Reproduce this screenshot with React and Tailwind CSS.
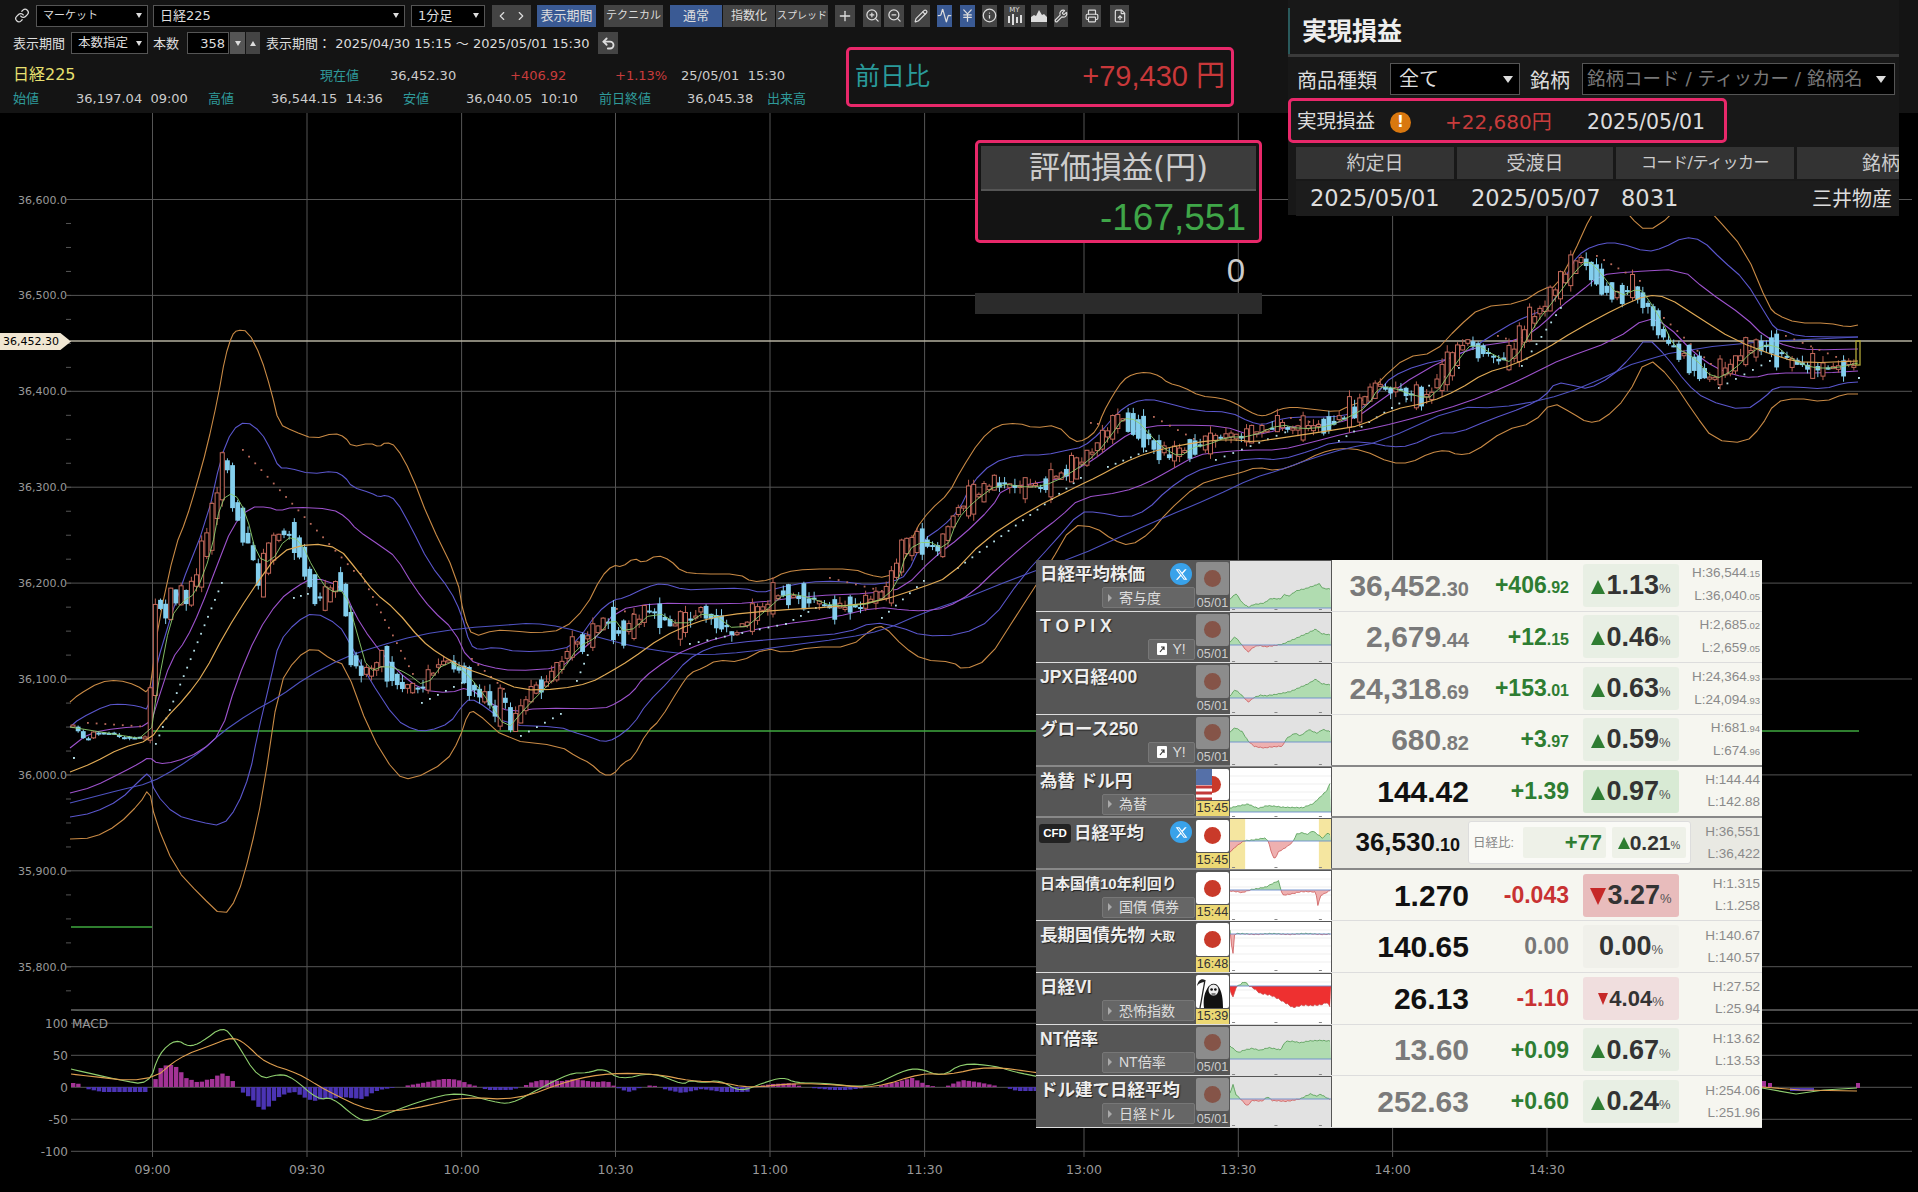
import React from 'react';
import { Link, ZoomIn, ZoomOut, Pencil, Activity, JapaneseYen, Info, Wrench, Printer, FileUp, Undo2, Plus, ChevronLeft, ChevronRight } from 'lucide-react';
import { FaXTwitter } from 'react-icons/fa6';

const jp = '[font-family:"DejaVu_Sans","Noto_Sans_CJK_JP",sans-serif]';

// chart lines, flat x,y lists read off the picture
const ORANGE_UP = [70,702,78,695,100,682,118,680,136,685,149,694,153,667,159,620,175,547,186,520,196,487,207,447,218,397,225,357,232,335,237,330,248,331,261,357,271,390,279,424,293,431,314,439,334,433,345,437,352,447,370,443,379,447,386,442,396,446,411,473,429,520,457,577,464,617,473,637,495,630,514,631,536,633,563,630,586,607,601,577,613,565,622,567,634,558,643,563,657,555,670,560,682,572,701,574,739,574,752,582,770,580,785,572,808,569,854,569,869,575,886,578,902,567,915,530,930,510,949,493,961,470,980,440,997,425,1018,423,1034,428,1057,425,1074,442,1085,440,1097,430,1103,413,1113,395,1123,380,1133,374,1147,372,1160,376,1168,383,1183,387,1200,396,1220,398,1233,402,1250,412,1260,416,1268,415,1280,409,1293,407,1310,409,1337,412,1347,407,1360,402,1370,395,1380,380,1406,357,1434,353,1458,327,1481,307,1521,303,1544,288,1556,287,1572,257,1592,213,1610,190,1630,217,1647,232,1670,217,1690,190,1714,215,1745,250,1769,307,1777,315,1797,323,1828,323,1848,327,1858,325];
const BLUE_UP = [70,727,79,719,107,705,121,704,138,706,149,710,154,673,178,593,207,520,221,457,232,430,246,421,261,432,271,450,279,468,289,468,311,474,334,471,345,477,352,487,371,493,379,497,386,495,396,500,411,527,429,563,450,590,461,613,470,645,479,650,495,647,518,652,563,650,578,640,597,613,613,600,624,598,647,587,662,583,685,590,708,589,743,588,762,593,777,588,808,582,838,581,869,585,892,582,907,575,923,540,942,527,959,510,972,483,992,463,1018,455,1045,455,1068,450,1083,447,1100,433,1117,413,1133,402,1150,399,1167,403,1197,411,1230,412,1250,422,1263,425,1277,420,1293,417,1333,417,1350,414,1367,405,1380,390,1391,377,1418,365,1458,357,1505,327,1525,317,1552,307,1572,263,1584,250,1603,243,1619,243,1647,252,1663,248,1684,237,1702,240,1722,260,1745,280,1765,313,1775,329,1785,331,1797,336,1828,337,1858,337];
const PURPLE_UP = [70,748,89,733,118,728,150,726,157,703,171,660,186,640,200,610,218,563,232,527,250,507,268,507,279,511,293,507,332,509,346,517,357,530,382,547,396,557,414,587,432,610,454,630,468,660,489,667,514,671,560,668,578,653,597,637,616,610,655,603,705,604,754,603,808,596,877,593,904,588,934,557,961,537,992,507,1003,488,1037,483,1068,477,1080,467,1093,460,1110,447,1130,433,1150,426,1180,425,1223,426,1250,435,1267,433,1287,427,1313,426,1337,423,1357,417,1377,403,1420,372,1473,347,1521,340,1544,323,1560,307,1580,292,1600,275,1627,272,1682,269,1706,290,1745,317,1765,337,1789,347,1812,350,1858,349];
const MID = [70,772,93,763,121,748,150,740,164,720,186,697,204,673,225,633,250,593,279,552,311,543,339,548,357,570,375,593,396,610,421,640,439,654,464,668,493,678,521,690,560,689,590,683,610,672,630,660,662,637,693,623,724,615,777,610,831,607,877,602,923,587,949,577,984,540,1030,510,1080,485,1097,477,1123,463,1147,453,1180,445,1213,440,1240,440,1253,442,1287,437,1333,430,1363,425,1391,410,1430,402,1458,390,1485,373,1513,365,1544,350,1576,330,1619,307,1647,295,1667,297,1698,317,1734,340,1781,358,1808,363,1858,361];
const GREEN = [70,727,107,733,150,740,157,690,171,617,182,602,196,593,211,553,221,500,234,492,246,513,257,557,271,563,286,537,300,540,314,570,329,592,345,590,357,633,368,672,386,665,407,673,425,687,446,660,464,670,486,697,507,730,521,713,536,697,563,670,578,647,597,637,613,617,626,635,655,610,682,627,708,610,739,633,770,607,785,593,808,597,835,607,877,603,896,587,907,550,926,540,946,550,957,520,972,503,999,483,1030,488,1053,483,1080,467,1097,453,1113,433,1123,418,1137,420,1150,435,1163,448,1180,457,1193,447,1207,445,1227,437,1250,437,1280,424,1300,429,1327,427,1347,418,1367,407,1379,387,1391,387,1418,397,1434,397,1458,360,1473,342,1497,357,1513,363,1536,323,1552,303,1576,270,1588,260,1600,272,1619,297,1639,288,1647,297,1663,323,1674,347,1694,357,1714,380,1734,370,1753,350,1773,343,1793,360,1812,368,1836,368,1858,363];
const BLUE_LOW = [70,817,93,813,120,800,140,780,149,772,155,793,175,815,200,822,222,826,237,807,250,773,257,737,271,677,279,642,296,622,314,612,339,625,348,640,368,677,396,720,414,730,429,731,450,723,461,707,470,698,486,707,507,725,560,727,573,732,590,737,603,742,615,739,633,725,647,703,670,680,687,660,708,648,731,643,800,637,846,633,873,622,900,627,923,636,961,635,992,620,1022,577,1053,543,1080,512,1097,512,1127,518,1147,510,1167,490,1193,472,1220,464,1253,458,1280,460,1313,450,1333,442,1367,442,1391,447,1410,446,1438,433,1458,433,1489,420,1525,407,1544,397,1556,382,1576,386,1588,389,1611,377,1631,357,1647,337,1667,357,1686,383,1706,400,1745,411,1765,397,1775,387,1797,387,1824,389,1844,383,1858,382];
const ORANGE_LOW = [70,839,93,838,118,825,140,803,149,788,155,820,175,868,200,895,223,917,237,898,250,853,263,793,279,685,296,658,314,647,332,660,345,665,370,733,396,775,412,780,446,762,459,740,468,713,475,711,507,740,560,746,577,757,590,763,603,775,613,775,623,763,633,758,647,732,660,720,680,687,690,673,703,668,717,660,740,662,766,648,785,653,812,647,850,647,873,628,884,626,904,647,923,660,953,662,963,670,988,660,1018,613,1049,565,1072,525,1095,527,1113,540,1130,546,1150,533,1167,512,1197,485,1223,477,1240,473,1257,467,1277,471,1300,463,1320,453,1340,448,1363,450,1391,463,1410,463,1430,453,1446,450,1458,455,1473,453,1505,430,1533,423,1552,402,1572,413,1588,423,1603,420,1627,397,1647,357,1670,377,1694,413,1714,440,1745,443,1761,427,1775,402,1797,398,1824,402,1844,394,1858,394];
const PURPLE_LOW = [70,793,93,787,123,772,140,763,149,757,158,764,175,762,200,752,221,733,236,683,257,633,279,600,296,587,314,577,343,587,354,613,371,640,396,670,421,690,450,693,468,687,489,703,511,712,540,708,603,709,617,703,633,692,643,678,667,660,685,650,720,637,777,625,831,618,877,607,904,610,923,611,946,608,972,593,999,567,1030,540,1060,517,1080,498,1123,492,1147,483,1167,472,1197,455,1220,452,1247,450,1280,450,1313,442,1347,433,1379,427,1418,417,1465,403,1505,387,1544,368,1560,360,1615,340,1647,317,1667,325,1694,353,1714,367,1734,375,1753,378,1773,373,1824,373,1858,371];
const LONG_MA = [70,803,93,797,120,790,150,783,177,768,203,750,221,733,250,713,279,697,307,677,343,658,375,647,418,635,464,628,507,625,532,623,563,627,597,637,636,647,674,653,705,655,747,652,777,647,846,638,884,630,923,613,961,600,1018,577,1080,555,1113,540,1163,518,1213,497,1253,478,1280,470,1313,458,1347,448,1380,442,1458,407,1497,408,1544,400,1584,387,1647,357,1734,343,1858,337];
// hand read closes for the morning, after that the green line leads the bars
const MORNING = [73,726,78,730,83,738,88,738,93,733,98,733,103,733,110,733,118,736,130,738,148,736,155,600,160,608,165,615,170,597,175,596,180,593,186,600,191,587,196,577,201,553,206,545,211,520,216,500,221,460,227,467,232,497,237,518,243,533,247,542,253,563,258,590,263,567,268,552,274,540,279,532,284,533,289,535,294,540,299,553,304,568,309,583,314,595,319,600,324,597,330,590,335,580,340,577,345,613,350,650,355,667,361,673,366,670,371,673,376,660,381,652,386,667,396,683,402,687,412,688,422,685,432,670,438,667,443,660,448,663,453,667,464,675,469,683,474,690,479,700,484,693,489,700,494,717,499,700,504,700,510,727,515,723,520,710,525,697,536,687,545,682,555,670];

const MACD_GREEN = [71,1069,119,1080,149,1085,159,1053,176,1039,189,1047,202,1042,223,1026,235,1040,259,1080,279,1074,292,1077,318,1100,332,1097,355,1117,368,1122,391,1112,424,1100,458,1092,494,1102,511,1104,537,1090,570,1073,587,1073,604,1068,620,1080,653,1072,683,1085,690,1080,703,1083,720,1080,740,1092,763,1083,783,1077,796,1083,822,1083,869,1088,902,1071,919,1068,942,1077,962,1063,995,1066,1015,1072,1040,1077];
const MACD_ORANGE = [71,1074,149,1083,179,1057,212,1045,232,1037,245,1043,265,1063,298,1073,325,1090,371,1112,405,1110,431,1105,464,1097,517,1100,570,1080,610,1073,657,1074,690,1081,720,1082,749,1088,796,1083,836,1085,875,1088,922,1073,948,1075,988,1066,1040,1073];
const HIST = [71,4,78,3,85,-2,100,-5,145,-5,152,5,159,20,165,22,172,22,178,16,185,8,190,7,197,4,203,7,210,8,216,12,222,14,229,8,235,0,240,-5,250,-12,258,-22,264,-23,270,-15,277,-10,285,-6,292,-5,298,-8,305,-12,312,-14,320,-12,330,-12,340,-10,360,-12,370,-6,377,-3,395,0,402,1,420,4,430,6,440,8,450,8,460,6,466,3,478,0,485,-3,495,-3,508,-3,520,0,530,5,540,7,560,6,572,8,585,6,595,5,605,6,612,1,620,-3,628,-5,640,0,650,2,665,-3,680,-6,700,-2,720,-5,745,-5,750,0,770,3,790,4,800,0,830,-3,845,-3,870,0,890,4,910,9,925,2,940,-1,960,7,975,5,990,2,1005,-1,1015,-4,1040,-4];

const RED_DOTS = [[87,722,148,726],[242,449,353,570],[360,573,412,673],[471,658,503,688],[616,608,632,613],[829,577,881,590],[1090,422,1097,423],[1153,416,1193,438],[1290,417,1327,425],[1497,335,1521,343],[1596,255,1639,280],[1663,317,1710,363],[1785,335,1852,363]];
const WHITE_DOTS = [[73,757,73,757],[155,743,221,582],[293,597,307,593],[421,702,461,682],[520,735,560,713],[576,680,594,637],[689,643,785,623],[785,623,815,607],[881,617,923,580],[957,567,1080,477],[1107,466,1153,447],[1215,459,1293,428],[1338,440,1391,407],[1391,407,1458,367],[1521,365,1560,307],[1718,387,1769,360],[1858,377,1858,377]];

const interp = (pts, x) => {
  if (x <= pts[0]) return pts[1];
  for (let i = 2; i < pts.length; i += 2) {
    if (x <= pts[i]) {
      const t = (x - pts[i - 2]) / (pts[i] - pts[i - 2]);
      return pts[i - 1] + (pts[i + 1] - pts[i - 1]) * t;
    }
  }
  return pts[pts.length - 1];
};

// corner cutting so the read off points don't look angular
const chaikin = (pts, rounds = 1) => {
  let cur = pts;
  for (let r = 0; r < rounds; r++) {
    const next = [cur[0], cur[1]];
    for (let i = 0; i + 3 < cur.length; i += 2) {
      next.push(cur[i] * 0.75 + cur[i + 2] * 0.25, cur[i + 1] * 0.75 + cur[i + 3] * 0.25);
      next.push(cur[i] * 0.25 + cur[i + 2] * 0.75, cur[i + 1] * 0.25 + cur[i + 3] * 0.75);
    }
    next.push(cur[cur.length - 2], cur[cur.length - 1]);
    cur = next;
  }
  return cur;
};

const toPoints = (pts) => {
  let s = '';
  for (let i = 0; i < pts.length; i += 2) s += `${pts[i].toFixed(1)},${pts[i + 1].toFixed(1)} `;
  return s;
};

const makeCandles = () => {
  let seed = 4242;
  const rnd = () => {
    seed = (seed * 16807) % 2147483647;
    return seed / 2147483647;
  };
  const close = (x) => (x < 560 ? interp(MORNING, x) : interp(GREEN, x + 7));
  const out = [];
  for (let x = 73; x < 1855; x += 5.147) {
    const calm = x < 150;
    const c = close(x) + (rnd() - 0.5) * (calm ? 2 : 8);
    const o = close(x - 5.147) + (rnd() - 0.5) * (calm ? 2 : 6);
    let top = Math.min(o, c);
    let bot = Math.max(o, c);
    // every few bars is a long one
    if (!calm && rnd() < 0.4) {
      const extra = 6 + rnd() * (x < 560 ? 16 : 20);
      if (c < o) top -= extra * 0.5;
      else bot += extra * 0.5;
      if (c < o) bot += extra * 0.5;
      else top -= extra * 0.5;
    }
    out.push({
      x,
      up: c < o,
      top,
      h: Math.max(bot - top, 2),
      hi: top - rnd() * (calm ? 2 : 7),
      lo: bot + rnd() * (calm ? 2 : 7),
    });
  }
  return out;
};

const Chart = () => {
  const candles = makeCandles();
  const priceLabels = ['36,600.0', '36,500.0', '36,400.0', '36,300.0', '36,200.0', '36,100.0', '36,000.0', '35,900.0', '35,800.0'];
  const timeX = [152.5, 307, 461.6, 615.5, 770, 924.6, 1084, 1238.3, 1392.6, 1547];
  const timeLabels = ['09:00', '09:30', '10:00', '10:30', '11:00', '11:30', '13:00', '13:30', '14:00', '14:30'];
  const macd = [[1023.3, '100'], [1055.3, '50'], [1087.3, '0'], [1119.3, '-50'], [1151.3, '-100']];
  const ticks = [];
  for (let y = 199.5; y < 1000; y += 23.98) ticks.push(y);
  const dots = (list, color) =>
    list.map((d, i) => {
      const n = Math.max(1, Math.round(Math.hypot(d[2] - d[0], d[3] - d[1]) / 9));
      const res = [];
      for (let k = 0; k <= n; k++) {
        res.push(<rect key={k} x={d[0] + ((d[2] - d[0]) * k) / n} y={d[1] + ((d[3] - d[1]) * k) / n} width="1.8" height="1.8" fill={color} />);
      }
      return <g key={i}>{res}</g>;
    });
  const bars = [];
  for (let x = 71; x < 1040; x += 5.147) {
    const v = interp(HIST, x);
    if (Math.abs(v) < 0.8) continue;
    bars.push(<rect key={x} x={x} y={v > 0 ? 1087 - v : 1087} width="4.4" height={Math.abs(v)} fill={v > 0 ? '#a23395' : '#4b34b4'} />);
  }

  return (
    <svg viewBox="0 113 1918 1079" className="block w-[1918px] h-[1079px] bg-black">
      {priceLabels.map((l, i) => {
        const y = 199.5 + i * 95.9;
        return (
          <g key={l}>
            <line x1="66" x2="1912" y1={y} y2={y} stroke="#555" />
            <text x="67" y={y + 4} textAnchor="end" fontSize="11" fill="#999" fontFamily="DejaVu Sans">{l}</text>
          </g>
        );
      })}
      {ticks.map((y) => (
        <line key={y} x1="66" x2="71" y1={y} y2={y} stroke="#555" />
      ))}
      {macd.map(([y, l]) => (
        <g key={l}>
          <line x1="71" x2="1912" y1={y} y2={y} stroke="#555" />
          <text x="68" y={y + 5} textAnchor="end" fontSize="12" fill="#999" fontFamily="DejaVu Sans">{l}</text>
        </g>
      ))}
      {timeX.map((x, i) => (
        <g key={x}>
          <line x1={x} x2={x} y1="113" y2="1157" stroke="#555" />
          <text x={x} y="1174" textAnchor="middle" fontSize="12.5" fill="#999" fontFamily="DejaVu Sans">{timeLabels[i]}</text>
        </g>
      ))}
      <line x1="71" x2="1918" y1="1010" y2="1010" stroke="#9a9a9a" />
      <text x="72" y="1028" fontSize="12" fill="#999" fontFamily="DejaVu Sans">MACD</text>

      <line x1="71" x2="152" y1="927" y2="927" stroke="#3fa83f" strokeWidth="1.5" />
      <line x1="153" x2="1859" y1="731" y2="731" stroke="#3fa83f" strokeWidth="1.5" />
      <line x1="70" x2="1912" y1="341" y2="341" stroke="#b5b19f" strokeWidth="1.6" />

      <g fill="none" strokeLinejoin="round" strokeWidth="1.1">
        <polyline points={toPoints(chaikin(ORANGE_UP))} stroke="#c98a45" />
        <polyline points={toPoints(chaikin(ORANGE_LOW))} stroke="#c98a45" />
        <polyline points={toPoints(chaikin(BLUE_UP))} stroke="#5a56cc" />
        <polyline points={toPoints(chaikin(BLUE_LOW))} stroke="#5a56cc" />
        <polyline points={toPoints(chaikin(LONG_MA))} stroke="#4e52c0" />
        <polyline points={toPoints(chaikin(PURPLE_UP))} stroke="#9d52cc" />
        <polyline points={toPoints(chaikin(PURPLE_LOW))} stroke="#9d52cc" />
      </g>
      {dots(RED_DOTS, '#b86a5a')}
      {dots(WHITE_DOTS, '#b5e0e8')}
      {candles.map((c) => (
        <g key={c.x}>
          <line x1={c.x} x2={c.x} y1={c.hi} y2={c.lo} stroke={c.up ? '#b85f50' : '#84cfee'} />
          {c.up ? (
            <rect x={c.x - 2} y={c.top} width="4" height={c.h} fill="#000" stroke="#c56a5c" />
          ) : (
            <rect x={c.x - 2.4} y={c.top} width="4.8" height={c.h} fill="#84cfee" />
          )}
        </g>
      ))}
      <rect x="1856" y="341" width="4" height="24" fill="none" stroke="#b3a838" strokeWidth="1.3" />
      <g fill="none" strokeLinejoin="round">
        <polyline points={toPoints(chaikin(MID))} stroke="#e0aa55" strokeWidth="1.2" />
        <polyline points={toPoints(chaikin(GREEN))} stroke="#8fcf6f" strokeWidth="0.9" />
      </g>

      {bars}
      <rect x="1762" y="1081" width="4" height="6" fill="#a23395" />
      <rect x="1768" y="1083" width="4" height="4" fill="#a23395" />
      <rect x="1856" y="1083" width="4" height="5" fill="#a23395" />
      <rect x="1790" y="1088" width="24" height="3" fill="#4b34b4" />
      <g fill="none" strokeWidth="1.1" strokeLinejoin="round">
        <polyline points={toPoints(chaikin(MACD_GREEN, 2))} stroke="#8fcf6f" />
        <polyline points={toPoints(chaikin(MACD_ORANGE, 2))} stroke="#e0a050" />
        <polyline points="1762,1088 1796,1094 1824,1090 1857,1088" stroke="#8fcf6f" />
        <polyline points="1762,1087 1800,1090 1857,1091" stroke="#e0a050" />
      </g>
    </svg>
  );
};

const Select = ({ className, children }) => (
  <div className={`h-[22px] bg-black border border-[#555] flex items-center justify-between pl-[6px] pr-[5px] text-[#ddd] ${className}`}>
    <span className="whitespace-nowrap">{children}</span>
    <span className="w-0 h-0 border-x-[3px] border-x-transparent border-t-[5px] border-t-[#ddd]" />
  </div>
);

const Tool = ({ className = 'w-[20px]', blue, children }) => (
  <div className={`h-[22px] flex items-center justify-center text-[#ddd] ${blue ? 'bg-[#3a5a94]' : 'bg-[#444]'} ${className}`}>{children}</div>
);

const Toolbar = () => (
  <div className={`h-[113px] bg-[#141414] text-[13px] leading-none ${jp}`}>
    <div className="h-[30px] flex items-center pl-[13px] pt-[1px]">
      <Link size={15} className="text-[#ddd] w-[18px]" />
      <Select className="w-[112px] ml-[5px] text-[11px]">マーケット</Select>
      <Select className="w-[252px] ml-[5px]">日経225</Select>
      <Select className="w-[74px] ml-[6px]">1分足</Select>
      <Tool className="w-[19px] ml-[7px]"><ChevronLeft size={14} /></Tool>
      <Tool className="w-[20px]"><ChevronRight size={14} /></Tool>
      <Tool blue className="w-[59px] ml-[6px]">表示期間</Tool>
      <Tool className="w-[59px] ml-[8px] text-[11px]">テクニカル</Tool>
      <Tool blue className="w-[52px] ml-[7px]">通常</Tool>
      <Tool className="w-[52px] ml-[1px] text-[12px]">指数化</Tool>
      <Tool className="w-[52px] ml-[1px] text-[10px]">スプレッド</Tool>
      <Tool className="w-[20px] ml-[7px]"><Plus size={16} /></Tool>
      <Tool className="w-[18px] ml-[8px]"><ZoomIn size={15} /></Tool>
      <Tool className="w-[20px] ml-[3px] text-[#777]"><ZoomOut size={15} /></Tool>
      <Tool className="w-[19px] ml-[7px]"><Pencil size={14} /></Tool>
      <Tool blue className="ml-[7px]"><Activity size={15} /></Tool>
      <Tool blue className="ml-[8px]"><JapaneseYen size={15} /></Tool>
      <Tool className="ml-[7px]"><Info size={15} /></Tool>
      <Tool className="w-[21px] ml-[7px] flex-col text-[7px]">
        <span>MY</span>
        <svg width="16" height="11" viewBox="0 0 16 11"><path d="M2 2v7M6 0v11M10 3v6M14 1v8" stroke="#ddd" strokeWidth="2" /></svg>
      </Tool>
      <Tool className="ml-[6px]">
        <svg width="16" height="12" viewBox="0 0 16 12"><path d="M0 12V7l3-2 2 1 3-6 3 5 2-1 3 3v5z" fill="#ddd" /></svg>
      </Tool>
      <Tool className="ml-[7px]"><Wrench size={14} /></Tool>
      <Tool className="w-[19px] ml-[14px]"><Printer size={14} /></Tool>
      <Tool className="w-[19px] ml-[9px]"><FileUp size={14} /></Tool>
    </div>
    <div className="h-[26px] flex items-center pl-[13px] text-[#ddd]">
      <span className="w-[58px]">表示期間</span>
      <Select className="w-[77px] text-[12.5px]">本数指定</Select>
      <span className="ml-[5px] w-[34px]">本数</span>
      <div className="w-[42px] h-[22px] bg-black border border-[#555] flex items-center justify-end pr-[3px]">358</div>
      <div className="w-[15px] h-[22px] bg-[#555] ml-[1px] flex items-center justify-center">
        <span className="w-0 h-0 border-x-[3px] border-x-transparent border-t-[5px] border-t-[#ddd]" />
      </div>
      <div className="w-[14px] h-[22px] bg-[#444] ml-[1px] flex items-center justify-center">
        <span className="w-0 h-0 border-x-[3px] border-x-transparent border-b-[5px] border-b-[#ddd]" />
      </div>
      <span className="ml-[6px] whitespace-pre">表示期間： 2025/04/30 15:15 ～ 2025/05/01 15:30</span>
      <Tool className="w-[20px] ml-[9px]"><Undo2 size={15} strokeWidth={3} /></Tool>
    </div>
    <div className="h-[30px] flex items-center pl-[13px] pt-[8px] whitespace-pre">
      <span className="w-[307px] text-[#e8e070] text-[16px]">日経225</span>
      <span className="w-[70px] text-[#2f9a9a]">現在値</span>
      <span className="w-[120px] text-[#ccc]">36,452.30</span>
      <span className="w-[105px] text-[#c83c3c]">+406.92</span>
      <span className="w-[66px] text-[#c83c3c]">+1.13%</span>
      <span className="text-[#ccc]">25/05/01  15:30</span>
    </div>
    <div className="h-[24px] flex items-center pl-[13px] whitespace-pre">
      <span className="w-[63px] text-[#2f9a9a]">始値</span>
      <span className="w-[132px] text-[#ccc]">36,197.04  09:00</span>
      <span className="w-[63px] text-[#2f9a9a]">高値</span>
      <span className="w-[132px] text-[#ccc]">36,544.15  14:36</span>
      <span className="w-[63px] text-[#2f9a9a]">安値</span>
      <span className="w-[133px] text-[#ccc]">36,040.05  10:10</span>
      <span className="w-[88px] text-[#2f9a9a]">前日終値</span>
      <span className="w-[80px] text-[#ccc]">36,045.38</span>
      <span className="text-[#2f9a9a]">出来高</span>
    </div>
  </div>
);

const RealizedPanel = () => (
  <div className={`absolute left-[1288px] top-0 w-[611px] h-[215px] bg-[#181818] text-[#ddd] ${jp}`}>
    <div className="h-[57px] border-b-[3px] border-[#3a3a3a] flex">
      <div className="w-[2px] h-[46px] mt-[8px] bg-[#2a5a5c]" />
      <div className="pl-[12px] pt-[19px] text-[25px] font-bold leading-none text-[#eee]">実現損益</div>
    </div>
    <div className="flex items-center h-[32px] mt-[6px] text-[20px] pl-[9px]">
      <span className="w-[93px] pt-[4px]">商品種類</span>
      <div className="w-[130px] h-[32px] bg-black border border-[#555] flex items-center justify-between pl-[8px] pr-[6px]">
        全て
        <span className="w-0 h-0 border-x-[5px] border-x-transparent border-t-[7px] border-t-[#ddd]" />
      </div>
      <span className="ml-[10px] w-[52px] pt-[4px]">銘柄</span>
      <div className="w-[313px] h-[32px] bg-black border border-[#555] flex items-center justify-between pl-[4px] pr-[8px] text-[#777] text-[18.5px] whitespace-nowrap">
        銘柄コード / ティッカー / 銘柄名
        <span className="w-0 h-0 border-x-[5px] border-x-transparent border-t-[7px] border-t-[#ddd]" />
      </div>
    </div>
    <div className="h-[44px] mt-[5px] flex items-center pl-[9px] text-[19.5px]">
      <span className="w-[93px]">実現損益</span>
      <span className="w-[21px] h-[21px] rounded-full bg-[#d9780f] text-white text-[15px] font-bold flex items-center justify-center">!</span>
      <span className="ml-[34px] w-[142px] text-[#c83c3c] text-[20px] whitespace-nowrap">+22,680円</span>
      <span className="text-[20.5px] whitespace-nowrap">2025/05/01</span>
    </div>
    <div className="flex mt-[3px] ml-[8px] h-[32px] gap-[3px] text-[19px] text-[#ccc] overflow-hidden">
      <div className="w-[158px] shrink-0 bg-[#333] flex items-center justify-center">約定日</div>
      <div className="w-[156px] shrink-0 bg-[#333] flex items-center justify-center">受渡日</div>
      <div className="w-[178px] shrink-0 bg-[#333] flex items-center justify-center text-[16px] tracking-[-0.5px] whitespace-nowrap">コード/ティッカー</div>
      <div className="w-[102px] shrink-0 bg-[#333] flex items-center pl-[65px] whitespace-nowrap">銘柄</div>
    </div>
    <div className="flex items-center ml-[8px] h-[35px] mt-[2px] bg-[#1c1c1c] text-[22.5px] whitespace-nowrap">
      <span className="w-[161px] pl-[14px]">2025/05/01</span>
      <span className="w-[159px] pl-[14px]">2025/05/07</span>
      <span className="w-[168px] pl-[5px]">8031</span>
      <span className="w-[108px] text-right text-[20px]">三井物産</span>
    </div>
  </div>
);

const PinkFrames = () => (
  <div className={jp}>
    <div className="absolute left-[846px] top-[47px] w-[388px] h-[60px] border-[3px] border-[#e8286a] rounded-[5px] flex items-center justify-between pl-[6px] pr-[6px]">
      <span className="text-[25px] text-[#2a9a9a]">前日比</span>
      <span className="text-[29px] text-[#c8383a] [font-family:'Liberation_Sans','Noto_Sans_CJK_JP',sans-serif]">+79,430 円</span>
    </div>
    <div className="absolute left-[975px] top-[140px] w-[287px] h-[103px] border-[3px] border-[#e8286a] rounded-[5px] bg-[#141414] p-[3px]">
      <div className="h-[45px] bg-[#3c3c3c] border-b-[2px] border-[#555] flex items-center justify-center text-[31px] text-[#ccc]">評価損益(円)</div>
      <div className="text-right pr-[10px] pt-[6px] text-[37px] leading-[42px] text-[#3fa648] [font-family:'Liberation_Sans',sans-serif]">-167,551</div>
    </div>
    <div className="absolute left-[975px] top-[254px] w-[270px] text-right text-[33px] leading-none text-[#ccc] [font-family:'Liberation_Sans',sans-serif]">0</div>
    <div className="absolute left-[975px] top-[293px] w-[287px] h-[21px] bg-[#2b2b2b]" />
  </div>
);

const Flag = ({ type, dim, date, live }) => (
  <div className="w-[33px] shrink-0 flex flex-col mr-[1px]">
    <div className={`h-[33px] mt-[2px] relative overflow-hidden rounded-[2px] flex items-center justify-center ${dim ? 'bg-[#8c8c8c]' : 'bg-white'}`}>
      {type !== 'vi' && <span className={`w-[17px] h-[17px] rounded-full ${dim ? 'bg-[#855448]' : 'bg-[#c93a2a]'}`} />}
      {type === 'us' && (
        <svg className="absolute left-0 top-0" width="16" height="33" viewBox="0 0 16 33">
          <rect width="16" height="33" fill="#fff" />
          <path d="M0 18h16M0 24h16M0 30h16" stroke="#c23a3a" strokeWidth="3" />
          <rect width="16" height="16" fill="#5570a8" />
        </svg>
      )}
      {type === 'vi' && (
        <svg width="33" height="33" viewBox="0 0 33 33">
          <path d="M8 33c-1-7 0-14 3-19 2-5 8-7 11-3 4 5 5 13 5 22z" fill="#111" />
          <ellipse cx="17.5" cy="15" rx="5" ry="5.5" fill="#eee" />
          <circle cx="15.6" cy="14.5" r="1.3" fill="#111" />
          <circle cx="19.4" cy="14.5" r="1.3" fill="#111" />
          <path d="M15.5 19h4" stroke="#111" strokeWidth="1.2" />
          <path d="M4 33 9 5" stroke="#222" strokeWidth="1.3" fill="none" />
          <path d="M9 5C5 3 2 6 1 11 3 8 6 7 9 7z" fill="#222" />
        </svg>
      )}
    </div>
    <div className={`h-[15px] mt-[1px] text-center text-[12.5px] leading-[15px] [font-family:'Liberation_Sans',sans-serif] ${live ? 'bg-[#ecd873] text-[#333]' : 'text-[#ccc]'}`}>{date}</div>
  </div>
);

// roughen the few read off points so a spark looks like real ticks
const jag = (pts, amp) => {
  const out = [];
  for (let x = 0; x <= 100; x += 1.5) {
    const y = interp(pts, x) + Math.sin(x * 2.7) * Math.cos(x * 1.3) * amp;
    out.push(x, y);
  }
  return out;
};

const Spark = ({ pts, base, dim, yellow, vi, grid }) => {
  const w = 100;
  const h = 50;
  const fine = jag(pts, vi ? 1.4 : 0.8);
  let line = '';
  for (let i = 0; i < fine.length; i += 2) line += `${fine[i]},${fine[i + 1].toFixed(1)} `;
  const area = `0,${base} ${line}100,${base}`;
  const gridLines = grid ? [8, 16, 24, 32, 40] : [];
  return (
    <svg viewBox="0 0 100 50" preserveAspectRatio="none" className={`w-[101px] shrink-0 h-[50px] mt-[1px] ${dim ? 'bg-[#e2e2e2]' : 'bg-white'}`}>
      {yellow && (
        <g fill="#f5e6a0">
          <rect x="0" width="15" height="50" />
          <rect x="88" width="12" height="50" />
        </g>
      )}
      {gridLines.map((y) => (
        <line key={y} x1="0" x2={w} y1={y} y2={y} stroke="#e4e4e4" strokeWidth="0.6" />
      ))}
      <svg x="0" y="0" width={w} height={base} viewBox={`0 0 ${w} ${base}`}>
        <polygon points={area} fill="#b0dcb0" />
      </svg>
      <svg x="0" y={base} width={w} height={h - base} viewBox={`0 ${base} ${w} ${h - base}`}>
        <polygon points={area} fill={vi ? '#ee3030' : '#eeb0b0'} />
      </svg>
      <svg x="0" y="0" width={w} height={base} viewBox={`0 0 ${w} ${base}`}>
        <polyline points={line} fill="none" stroke="#3f8f3f" strokeWidth="0.7" />
      </svg>
      <svg x="0" y={base} width={w} height={h - base} viewBox={`0 ${base} ${w} ${h - base}`}>
        <polyline points={line} fill="none" stroke="#c84a4a" strokeWidth="0.7" />
      </svg>
      <line x1="0" x2={w} y1={base} y2={base} stroke="#6a8ccc" strokeWidth="0.9" />
      <path d="M2 48.5h3M44 48.5h3M88 48.5h3" stroke="#888" strokeWidth="1" />
    </svg>
  );
};

const Num = ({ main, frac, big, small, className = '' }) => (
  <span className={`font-bold whitespace-nowrap ${big} ${className}`}>
    {main}
    {frac && <span className={small}>{frac}</span>}
  </span>
);

const HighLow = ({ h, hf, l, lf, className = 'w-[81px]' }) => (
  <div className={`${className} text-right text-[13.5px] leading-[22px] text-[#8a8a8a] whitespace-nowrap`}>
    <div>{h}{hf && <span className="text-[9.5px]">{hf}</span>}</div>
    <div>{l}{lf && <span className="text-[9.5px]">{lf}</span>}</div>
  </div>
);

const Badge = ({ dir, pct, bg, size = 'text-[27px]', tri = 'big' }) => (
  <div className={`w-[96px] h-[43px] rounded-[3px] ml-[14px] flex items-center justify-center ${bg}`}>
    {dir === 'up' && <span className="w-0 h-0 mr-[1px] border-x-[7px] border-x-transparent border-b-[14px] border-b-[#2e7d32] mt-[3px]" />}
    {dir === 'down' && <span className={`w-0 h-0 mr-[1px] mt-[2px] border-x-transparent border-t-[#c62828] ${tri === 'big' ? 'border-x-[8px] border-t-[17px]' : 'border-x-[5px] border-t-[12px]'}`} />}
    <span className={`font-bold text-[#333] ${size}`}>{pct}</span>
    <span className="text-[13px] text-[#555] mt-[7px]">%</span>
  </div>
);

const SubBtn = ({ children }) => (
  <div className="absolute right-[1px] top-[27px] w-[93px] h-[21px] rounded-[2px] bg-[#666] border border-[#777] flex items-center text-[14px] text-[#ddd] leading-none">
    <span className="ml-[5px] mr-[7px] w-0 h-0 border-y-[4px] border-y-transparent border-l-[4px] border-l-[#aaa]" />
    {children}
  </div>
);

const YBtn = () => (
  <div className="absolute right-[1px] top-[27px] w-[47px] h-[21px] rounded-[2px] bg-[#666] border border-[#777] flex items-center justify-center gap-[5px] text-[14px] text-[#ddd] leading-none">
    <svg width="10" height="12" viewBox="0 0 10 12">
      <rect width="10" height="12" rx="1" fill="#fff" />
      <path d="M3 9l4-5M4 4h3v3" stroke="#333" strokeWidth="1.2" fill="none" />
    </svg>
    Y!
  </div>
);

const XBadge = () => (
  <span className="absolute right-[4px] top-[3px] w-[22px] h-[22px] rounded-full bg-[#39a2ea] text-white flex items-center justify-center">
    <FaXTwitter size={13} />
  </span>
);

const ROWS = [
  { name: '日経平均株価', sub: '寄与度', x: true, dim: true, date: '05/01', val: ['36,452', '.30'], chg: ['+406', '.92'], pct: '1.13', hl: ['H:36,544', '.15', 'L:36,040', '.05'], base: 47, pts: [0,38,6,33,12,42,18,46,24,43,34,42,40,38,50,38,54,33,58,35,65,30,75,28,85,24,88,22,92,27,100,28] },
  { name: 'T O P I X', topix: true, y: true, dim: true, date: '05/01', val: ['2,679', '.44'], chg: ['+12', '.15'], pct: '0.46', hl: ['H:2,685', '.02', 'L:2,659', '.05'], base: 32, pts: [0,29,5,24,10,30,14,35,18,39,23,34,28,32,36,34,44,33,52,31,58,28,66,25,76,21,85,16,90,20,100,22] },
  { name: 'JPX日経400', dim: true, date: '05/01', val: ['24,318', '.69'], chg: ['+153', '.01'], pct: '0.63', hl: ['H:24,364', '.93', 'L:24,094', '.93'], base: 34, pts: [0,32,5,26,10,30,14,34,18,38,24,33,30,31,36,32,44,31,52,29,60,27,68,24,76,21,85,15,90,19,100,21] },
  { name: 'グロース250', y: true, dim: true, date: '05/01', val: ['680', '.82'], chg: ['+3', '.97'], pct: '0.59', hl: ['H:681', '.94', 'L:674', '.96'], base: 26, pts: [0,16,5,12,12,16,18,25,24,30,34,32,45,31,52,30,56,22,64,17,70,20,78,14,86,17,92,13,100,16] },
  { name: '為替 ドル円', sub: '為替', flag: 'us', date: '15:45', live: true, val: ['144.42'], chg: ['+1.39'], pct: '0.97', strong: true, hl: ['H:144.44', '', 'L:142.88', ''], base: 44, grid: true, pts: [0,40,10,38,18,36,28,40,36,38,50,39,60,39,72,40,82,36,90,28,96,22,100,13] },
  { cfd: true },
  { name: '日本国債10年利回り', nameSize: 'text-[15px]', sub: '国債 債券', live: true, date: '15:44', val: ['1.270'], chg: ['-0.043'], neg: true, pct: '3.27', dir: 'down', bg: 'bg-[#e8bcbc]', hl: ['H:1.315', '', 'L:1.258', ''], base: 19, grid: true, pts: [0,20,12,22,22,18,36,16,48,10,52,24,70,21,85,21,87,34,90,24,100,19] },
  { name: '長期国債先物', tail: '大取', live: true, date: '16:48', val: ['140.65'], chg: ['0.00'], flat: true, pct: '0.00', dir: 'none', bg: 'bg-[#f0f0ea]', hl: ['H:140.67', '', 'L:140.57', ''], base: 12, grid: true, pts: [0,8,1,20,3,32,4,14,6,12,100,12] },
  { name: '日経VI', sub: '恐怖指数', flag: 'vi', live: true, date: '15:39', val: ['26.13'], chg: ['-1.10'], neg: true, pct: '4.04', dir: 'down', tri: 'small', size: 'text-[22px]', bg: 'bg-[#f0dede]', hl: ['H:27.52', '', 'L:25.94', ''], base: 12, vi: true, grid: true, pts: [0,16,3,24,6,14,10,11,15,8,18,11,24,14,30,19,40,22,50,26,58,30,62,33,70,32,80,32,90,30,96,28,100,34] },
  { name: 'NT倍率', sub: 'NT倍率', dim: true, date: '05/01', val: ['13.60'], chg: ['+0.09'], pct: '0.67', hl: ['H:13.62', '', 'L:13.53', ''], base: 33, pts: [0,20,8,27,15,24,22,22,30,24,38,22,50,24,55,15,62,15,70,17,80,15,90,14,100,15] },
  { name: 'ドル建て日経平均', sub: '日経ドル', dim: true, date: '05/01', val: ['252.63'], chg: ['+0.60'], pct: '0.24', hl: ['H:254.06', '', 'L:251.96', ''], base: 22, pts: [0,16,3,8,6,18,12,24,17,29,22,23,32,24,37,20,42,24,55,24,70,22,80,17,85,19,90,17,100,23] },
];

const Row = ({ r, thick }) => {
  const valCls = r.dim ? 'text-[#7a7a7a]' : 'text-[#111]';
  const chgCls = r.neg ? 'text-[#c83232]' : r.flat ? 'text-[#777]' : 'text-[#2e7d32]';
  const dir = r.dir || 'up';
  const bg = r.bg || (r.strong ? 'bg-[#d8ead4]' : 'bg-[#e8efe4]');
  return (
    <div className={`flex h-[51.64px] bg-[#565656] ${thick ? 'border-b-[2px] border-[#888]' : 'border-b border-[#ddd]'}`}>
      <div className="w-[160px] shrink-0 relative">
        <div className={`absolute left-[4px] top-[4px] whitespace-nowrap font-bold leading-[20px] text-[#eee] [text-shadow:1px_1px_1px_#222] ${r.nameSize || 'text-[17.5px]'}`}>
          {r.name}
          {r.tail && <span className="text-[12.5px] ml-[5px]">{r.tail}</span>}
        </div>
        {r.x && <XBadge />}
        {r.sub && <SubBtn>{r.sub}</SubBtn>}
        {r.y && <YBtn />}
      </div>
      <Flag type={r.flag} dim={r.dim} date={r.date} live={r.live} />
      <Spark pts={r.pts} base={r.base} dim={r.dim} vi={r.vi} grid={r.grid} />
      <div className="flex-1 ml-[1px] bg-[#f6f6f0] flex items-center">
        <div className="w-[137px] text-right">
          <Num main={r.val[0]} frac={r.val[1]} big="text-[30px]" small="text-[20px]" className={valCls} />
        </div>
        <div className="w-[100px] text-right">
          <Num main={r.chg[0]} frac={r.chg[1]} big="text-[23px]" small="text-[16px]" className={chgCls} />
        </div>
        <Badge dir={dir} pct={r.pct} bg={bg} size={r.size} tri={r.tri} />
        <HighLow h={r.hl[0]} hf={r.hl[1]} l={r.hl[2]} lf={r.hl[3]} />
      </div>
    </div>
  );
};

const CfdRow = () => (
  <div className="flex h-[51.64px] bg-[#565656] border-b-[2px] border-[#888]">
    <div className="w-[160px] shrink-0 relative">
      <div className="absolute left-[3px] top-[5px] flex items-center font-bold text-[17.5px] leading-[20px] text-[#eee] [text-shadow:1px_1px_1px_#222]">
        <span className="w-[32px] h-[19px] rounded-[3px] bg-[#222] text-white text-[11.5px] flex items-center justify-center mr-[3px] [text-shadow:none]">CFD</span>
        日経平均
      </div>
      <XBadge />
    </div>
    <Flag live date="15:45" />
    <Spark yellow base={22} pts={[0,33,7,27,14,22,20,21,26,20,34,19,38,22,40,31,44,41,48,33,54,29,62,23,66,15,72,14,76,16,82,12,88,16,92,19,96,14,100,16]} />
    <div className="flex-1 ml-[1px] bg-[#e9e9e3] flex items-center">
      <div className="w-[128px] text-right">
        <Num main="36,530" frac=".10" big="text-[26px]" small="text-[18px]" className="text-[#111]" />
      </div>
      <div className="w-[223px] h-[43px] ml-[8px] bg-[#fafaf6] border border-[#ddd] rounded-[3px] flex items-center pl-[4px]">
        <span className="w-[50px] text-[12.5px] text-[#888] whitespace-nowrap">日経比:</span>
        <div className="w-[83px] h-[31px] bg-[#eef1e8] rounded-[2px] flex items-center justify-end pr-[4px] font-bold text-[22px] text-[#2e7d32]">+77</div>
        <div className="w-[74px] h-[31px] ml-[6px] bg-[#eef1e8] rounded-[2px] flex items-center justify-center">
          <span className="w-0 h-0 border-x-[6px] border-x-transparent border-b-[12px] border-b-[#2e7d32]" />
          <span className="font-bold text-[21px] text-[#333]">0.21</span>
          <span className="text-[11px] text-[#555] mt-[5px]">%</span>
        </div>
      </div>
      <HighLow h="H:36,551" l="L:36,422" className="w-[69px]" />
    </div>
  </div>
);

const Watchlist = () => (
  <div className="absolute left-[1036px] top-[560px] w-[726px] h-[568px] overflow-hidden [font-family:'Liberation_Sans','Noto_Sans_CJK_JP',sans-serif]">
    {ROWS.map((r, i) => (r.cfd ? <CfdRow key={i} /> : <Row key={i} r={r} thick={i === 4 || i === 3} />))}
  </div>
);

const App = () => {
  return (
    <div className="relative w-[1918px] h-[1192px] overflow-hidden bg-black">
      <Toolbar />
      <Chart />
      <div className="absolute left-0 top-[333px] w-[71px] h-[17px] bg-[#f0e6d2] text-black text-[11px] leading-[17px] pl-[3px] [font-family:'DejaVu_Sans',sans-serif] [clip-path:polygon(0_0,85%_0,100%_50%,85%_100%,0_100%)]">36,452.30</div>
      <Watchlist />
      <RealizedPanel />
      <PinkFrames />
      <div className="absolute left-[1288px] top-[98px] w-[439px] h-[45px] border-[3px] border-[#e8286a] rounded-[5px]" />
    </div>
  );
};

export default App;
